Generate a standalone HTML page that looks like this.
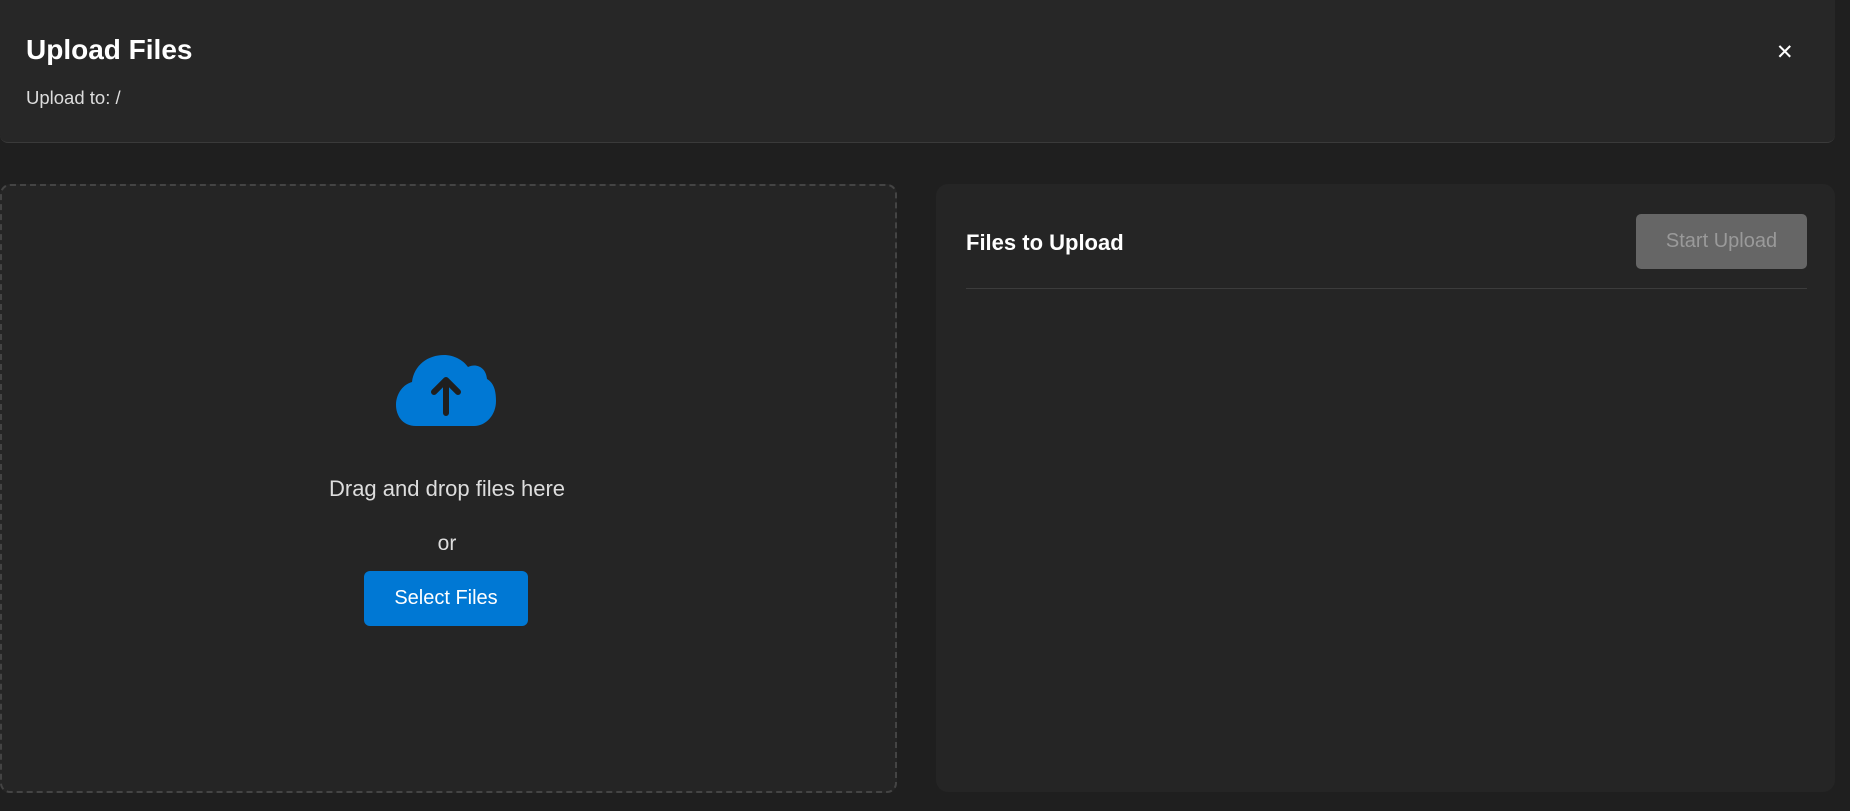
<!DOCTYPE html>
<html><head><style>
html,body{margin:0;padding:0;width:1850px;height:811px;background:#1f1f1f;overflow:hidden;font-family:"Liberation Sans",sans-serif;}
.hdr{position:absolute;left:0;top:0;width:1835px;height:142px;background:#272727;border-bottom:1px solid #3a3a3a;border-radius:0 0 8px 8px;}
.title{position:absolute;left:26px;top:34px;font-size:28px;font-weight:bold;color:#fff;}
.sub{position:absolute;left:26px;top:87px;font-size:18.5px;color:#ddd;}
.x{position:absolute;left:1776px;top:40px;font-size:21px;color:#fff;}
.drop{position:absolute;left:0;top:184px;width:893px;height:605px;border:2px dashed #444;border-radius:10px;background:#252525;}
.right{position:absolute;left:936px;top:184px;width:899px;height:608px;background:#252525;border-radius:12px;}
.ft{position:absolute;left:30px;top:46px;font-size:22px;font-weight:bold;color:#fff;}
.sb{position:absolute;left:700px;top:30px;width:171px;height:55px;background:#666;border-radius:5px;color:#9a9a9a;font-size:20px;line-height:55px;text-align:center;}
.div{position:absolute;left:30px;top:104px;width:841px;height:1px;background:#3c3c3c;}
.c{position:absolute;left:0;width:894px;text-align:center;color:#ddd;}
.btn{position:absolute;left:364px;top:571px;width:164px;height:55px;background:#0078d4;border-radius:6px;color:#fff;font-size:20px;line-height:55px;text-align:center;}
</style></head><body>
<div class="hdr"><div class="title">Upload Files</div><div class="sub">Upload to: /</div><div class="x">✕</div></div>
<div class="drop">
<svg style="position:absolute;left:394px;top:169px" width="100" height="72" viewBox="0 0 100 72">
<path d="M20 71 C6 71 0 60 0 50 C0 38 8 29 16 27 C18 10 32 0 48 0 C58 0 67 5 72 12 C80 8 90 12 91 24 C98 28 100 36 100 46 C100 60 90 71 78 71 Z" fill="#0078d4"/>
<path d="M50 58 V25 M38 37 L50 25 L62 37" stroke="#1f1f1f" stroke-width="6" fill="none" stroke-linecap="round" stroke-linejoin="round"/>
</svg>
</div>
<div class="c" style="top:476px;font-size:22px;">Drag and drop files here</div>
<div class="c" style="top:532px;font-size:21px;">or</div>
<div class="btn">Select Files</div>
<div class="right"><div class="ft">Files to Upload</div><div class="sb">Start Upload</div><div class="div"></div></div>
</body></html>
